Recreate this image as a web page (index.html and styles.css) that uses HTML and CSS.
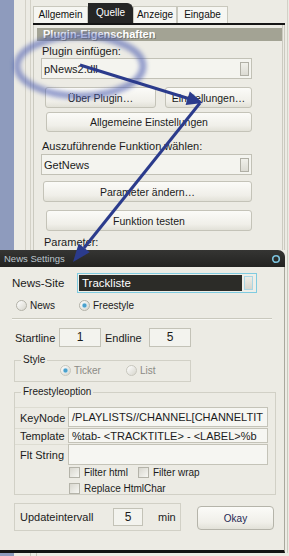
FILE: index.html
```html
<!DOCTYPE html>
<html lang="de">

<head>
    <meta charset="utf-8">
    <meta name="viewport" content="width=device-width, initial-scale=1.0">
    <title>News Settings</title>

    <link rel="stylesheet" href="styles.css">
</head>

<body>

    <div class="desk">
        <div class="strip"></div>
        <div class="rail"></div>
        <div class="dialog">
            <div class="tabs">
                <div class="tab tab-allg">Allgemein</div>
                <div class="tab tab-quelle">Quelle</div>
                <div class="tab tab-anz">Anzeige</div>
                <div class="tab tab-ein">Eingabe</div>
            </div>
            <div class="tabline"></div>
            <div class="panel">
                <div class="caption">Plugin-Eigenschaften</div>
                <p class="lbl lbl-plugin">Plugin einfügen:</p>
                <div class="combo combo-plugin"><span>pNews2.dll</span><i class="drop"></i></div>
                <div class="btnrow">
                    <button class="btn btn-about">Über Plugin…</button>
                    <button class="btn btn-settings">Einstellungen…</button>
                </div>
                <button class="btn btn-general">Allgemeine Einstellungen</button>
                <p class="lbl lbl-func">Auszuführende Funktion wählen:</p>
                <div class="combo combo-func"><span>GetNews</span><i class="drop"></i></div>
                <button class="btn btn-params">Parameter ändern…</button>
                <button class="btn btn-test">Funktion testen</button>
                <p class="lbl lbl-params">Parameter:</p>
            </div>
        </div>
        <div class="edge"></div>
    </div>

    <div class="lower">
        <div class="win">
            <div class="titlebar">
                <span>News Settings</span>
                <svg class="winicon" width="10" height="10" viewBox="0 0 10 10">
                    <circle cx="5" cy="5" r="3.3" fill="none" stroke="#7cc4df" stroke-width="1.6"/>
                </svg>
            </div>
            <div class="winbody">
                <div class="row row-site">
                    <span class="site-lbl">News-Site</span>
                    <div class="sitebox">
                        <div class="sitefield">Trackliste</div>
                        <i class="sitedrop"></i>
                    </div>
                </div>
                <div class="row row-mode">
                    <span class="opt opt-news"><span class="radio"></span>News</span>
                    <span class="opt"><span class="radio on"></span>Freestyle</span>
                </div>
                <div class="sep"></div>
                <div class="row row-lines">
                    <span class="start-lbl">Startline</span>
                    <span class="num">1</span>
                    <span class="end-lbl">Endline</span>
                    <span class="num">5</span>
                </div>
                <fieldset class="group group-style">
                    <legend>Style</legend>
                    <div class="row row-style">
                        <span class="opt opt-off opt-ticker"><span class="radio on dim"></span>Ticker</span>
                        <span class="opt opt-off"><span class="radio dim"></span>List</span>
                    </div>
                </fieldset>
                <fieldset class="group group-free">
                    <legend>Freestyleoption</legend>
                    <div class="field field-key">
                        <span class="fname">KeyNode</span>
                        <span class="fval">/PLAYLISTS//CHANNEL[CHANNELTIT</span>
                    </div>
                    <div class="field field-tpl">
                        <span class="fname">Template</span>
                        <span class="fval">%tab- &lt;TRACKTITLE&gt; - &lt;LABEL&gt;%b</span>
                    </div>
                    <div class="field field-flt">
                        <span class="fname">Flt String</span>
                        <span class="fval"></span>
                    </div>
                    <div class="checks checks-1">
                        <span class="opt opt-html"><span class="check"></span>Filter html</span>
                        <span class="opt"><span class="check"></span>Filter wrap</span>
                    </div>
                    <div class="checks checks-2">
                        <span class="opt"><span class="check"></span>Replace HtmlChar</span>
                    </div>
                </fieldset>
                <div class="bottomrow">
                    <div class="update">
                        <span class="upd-lbl">Updateintervall</span>
                        <span class="num num-upd">5</span>
                        <span class="min">min</span>
                    </div>
                    <button class="btn btn-okay">Okay</button>
                </div>
            </div>
        </div>
        <div class="edge edge-low"></div>
    </div>

    <div class="tail"></div>

    <!-- markierung: kreis und pfeile ueber dem screenshot -->
    <svg class="marks" width="289" height="556" viewBox="0 0 289 556">
        <defs>
            <filter id="soft" x="-20%" y="-40%" width="140%" height="180%">
                <feGaussianBlur stdDeviation="2.2"/>
            </filter>
        </defs>
        <ellipse cx="80" cy="66" rx="63" ry="30" fill="none" stroke="#4658b0" stroke-width="7" opacity="0.55" filter="url(#soft)"/>
        <line x1="80" y1="65" x2="190" y2="99" stroke="#2b3b8c" stroke-width="3"/>
        <polygon points="203,103 189.8,91.6 185.6,105" fill="#2b3b8c"/>
        <line x1="200" y1="103" x2="84" y2="248" stroke="#2b3b8c" stroke-width="3"/>
        <polygon points="73,262 78.7,243.5 89.7,252.3" fill="#2b3b8c"/>
    </svg>

</body>

</html>
```

FILE: styles.css
```css
* {
    box-sizing: border-box;
}

html,
body {
    margin: 0;
}

body {
    position: relative;
    width: 289px;
    height: 556px;
    overflow: hidden;
    background: #ecebe4;
    font-family: "Liberation Sans", Arial, sans-serif;
    font-size: 11px;
    color: #1b1b1b;
}

/* hintergrund-dialog */

.desk {
    display: flex;
    height: 250px;
    overflow: hidden;
}

.strip {
    width: 14px;
    background: #8e9bbd;
}

.rail {
    width: 19px;
    background: linear-gradient(to right, #ecebe4 11px, #d3d1c7 11px 12px, #ecebe4 12px 16px, #d3d1c7 16px 17px, #ecebe4 17px);
}

.dialog {
    display: flex;
    flex-direction: column;
    width: 252px;
}

.edge {
    width: 4px;
    background: linear-gradient(to right, #ecebe4 2px, #d3d1c7 2px 3px, #ecebe4 3px);
}

.tabs {
    display: flex;
    align-items: flex-end;
    height: 23px;
}

.tab {
    height: 17px;
    border: 1px solid #c9c8bd;
    border-bottom: none;
    background: #f6f6f2;
    font-size: 10px;
    line-height: 16px;
    text-align: center;
    color: #111;
}

.tab-allg {
    width: 55px;
}

.tab-quelle {
    width: 45px;
    height: 20px;
    border-color: #252525;
    border-top-right-radius: 6px;
    background: #252525;
    color: #fff;
    line-height: 18px;
}

.tab-anz {
    width: 44px;
}

.tab-ein {
    width: 51px;
}

.tabline {
    height: 2px;
    background: #151515;
}

.panel {
    flex: 1;
    border-left: 1px solid #cbcac0;
    border-right: 3px double #cbcac0;
}

.caption {
    height: 13px;
    margin: 3px 0 0 3px;
    padding-left: 6px;
    background: #a3a394;
    color: #fff;
    font-weight: bold;
    font-size: 11px;
    line-height: 13px;
    text-shadow: 1px 1px 0 #7b7b70;
}

.lbl {
    height: 12px;
    margin: 0 0 0 8px;
    line-height: 12px;
    white-space: nowrap;
}

.lbl-plugin {
    margin-top: 4px;
}

.combo {
    display: flex;
    align-items: center;
    justify-content: space-between;
    width: 211px;
    height: 21px;
    margin: 1px 0 0 7px;
    padding: 0 2px 0 2px;
    border: 1px solid #c2c1b6;
    background: #f4f4ef;
    font-size: 11px;
}

.drop {
    width: 9px;
    height: 14px;
    border: 1px solid #b0afa5;
    background: linear-gradient(#f0f0ea, #dcdbd3);
}

.btn {
    display: block;
    height: 21px;
    margin: 0;
    padding: 0;
    border: 1px solid #c4c3b8;
    border-radius: 3px;
    background: linear-gradient(#fbfbf8, #f0efe9 70%, #e2e1d8);
    font-family: inherit;
    font-size: 10.5px;
    color: #1b1b1b;
    white-space: nowrap;
}

.btnrow {
    display: flex;
    margin-top: 8px;
}

.btn-about {
    width: 111px;
    margin-left: 11px;
}

.btn-settings {
    width: 87px;
    margin-left: 9px;
}

.btn-general {
    width: 206px;
    height: 20px;
    margin: 4px 0 0 12px;
}

.lbl-func {
    margin-top: 8px;
}

.combo-func {
    margin-top: 2px;
}

.btn-params {
    width: 209px;
    margin: 6px 0 0 9px;
}

.btn-test {
    width: 206px;
    margin: 8px 0 0 12px;
}

.lbl-params {
    margin: 5px 0 0 10px;
}

/* news settings fenster */

.lower {
    display: flex;
    height: 303px;
}

.win {
    display: flex;
    flex-direction: column;
    width: 285px;
}

.edge-low {
    background: linear-gradient(to right, #ecebe4 2px, #c9c8bd 2px 3px, #ecebe4 3px);
}

.titlebar {
    display: flex;
    align-items: center;
    justify-content: space-between;
    height: 17px;
    padding: 0 4px;
    border-top-right-radius: 7px;
    background: linear-gradient(#353533, #232321);
    color: #bcc6ce;
    font-size: 9.5px;
}

.winicon {
    display: block;
}

.winbody {
    flex: 1;
    border-right: 1px solid #a9a89d;
    border-bottom: 3px solid #141414;
}

.row {
    display: flex;
    align-items: center;
}

.row-site {
    height: 20px;
    margin-top: 6px;
}

.site-lbl {
    width: 65px;
    margin-left: 12px;
    font-size: 11.5px;
}

.sitebox {
    display: flex;
    align-items: center;
    width: 180px;
    height: 20px;
    padding: 1px;
    border: 1px solid #7fcbe0;
    background: #eeeee8;
}

.sitefield {
    width: 163px;
    height: 16px;
    padding-left: 3px;
    background: #2c2c28;
    color: #fff;
    font-size: 11.5px;
    line-height: 16px;
}

.sitedrop {
    width: 9px;
    height: 14px;
    margin-left: 2px;
    border: 1px solid #a9d6e4;
    background: linear-gradient(#ecece6, #d6d5cd);
}

.row-mode {
    height: 12px;
    margin-top: 6px;
}

.opt {
    display: flex;
    align-items: center;
    gap: 3px;
    font-size: 10px;
    white-space: nowrap;
}

.opt-news {
    width: 63px;
    margin-left: 16px;
}

.radio {
    flex: none;
    width: 11px;
    height: 11px;
    border: 1px solid #b3b2a8;
    border-radius: 50%;
    background: linear-gradient(135deg, #fff, #d6d5cc);
}

.radio.on {
    background: radial-gradient(circle, #4aa0cc 0 1.5px, #cde6f0 2.5px, transparent 3px), linear-gradient(135deg, #fff, #d6d5cc);
}

.radio.dim {
    border-color: #c8c7be;
}

.opt-off {
    color: #8b8a85;
}

.sep {
    width: 260px;
    height: 2px;
    margin: 7px 0 0 12px;
    border-top: 1px solid #c9c8bd;
    border-bottom: 1px solid #f8f8f4;
}

.row-lines {
    height: 19px;
    margin-top: 8px;
}

.start-lbl {
    width: 44px;
    margin-left: 15px;
}

.end-lbl {
    width: 44px;
    margin-left: 4px;
}

.num {
    width: 42px;
    height: 19px;
    border: 1px solid #c3c2b7;
    background: #f3f3ee;
    font-size: 12px;
    line-height: 17px;
    text-align: center;
}

.group {
    margin: 0 0 0 14px;
    padding: 0;
    border: 1px solid #d1d0c6;
    min-width: 0;
}

.group legend {
    margin-left: 6px;
    padding: 0 2px;
    font-size: 10px;
    line-height: 10px;
}

.group-style {
    width: 177px;
    margin-top: 8px;
    padding-bottom: 5px;
}

.row-style {
    height: 11px;
}

.opt-ticker {
    width: 66px;
    margin-left: 45px;
}

.group-free {
    width: 262px;
    margin-top: 4px;
    padding-top: 9px;
}

.group-free legend {
    line-height: 12px;
}

.field {
    display: flex;
    height: 20px;
}

.field-tpl {
    height: 15px;
    margin-top: 1px;
}

.field-flt {
    height: 21px;
    margin-top: 1px;
}

.fname {
    width: 53px;
    padding-left: 5px;
    border-top: 1px solid #dddcd2;
    white-space: nowrap;
    display: flex;
    align-items: center;
}

.fval {
    width: 200px;
    padding-left: 3px;
    border: 1px solid #c4c3b8;
    background: #f6f6f2;
    white-space: nowrap;
    overflow: hidden;
    display: flex;
    align-items: center;
}

.checks {
    display: flex;
    height: 11px;
    margin-left: 54px;
}

.checks .opt {
    gap: 4px;
}

.checks-1 {
    margin-top: 2px;
}

.checks-2 {
    margin-top: 5px;
}

.opt-html {
    width: 69px;
}

.check {
    flex: none;
    width: 11px;
    height: 11px;
    border: 1px solid #b4b3a9;
    background: linear-gradient(135deg, #d8d7cf, #f7f7f3);
}

.bottomrow {
    display: flex;
    align-items: flex-start;
    margin-top: 8px;
}

.update {
    display: flex;
    align-items: center;
    width: 167px;
    height: 28px;
    margin-left: 14px;
    padding-left: 5px;
    border: 1px solid #d1d0c6;
}

.upd-lbl {
    width: 93px;
}

.num-upd {
    width: 30px;
    height: 18px;
    line-height: 16px;
}

.min {
    margin-left: 15px;
}

.btn-okay {
    width: 77px;
    height: 24px;
    margin: 3px 0 0 16px;
    border-color: #b5b4aa;
    border-radius: 4px;
    font-size: 10px;
    color: #1f2752;
}

.tail {
    height: 3px;
    background: linear-gradient(to right, #8e9bbd 14px, #ecebe4 14px 30px, #c9c8bd 30px 31px, #ecebe4 31px 36px, #c9c8bd 36px 37px, #ecebe4 37px);
}

.marks {
    position: absolute;
    top: 0;
    left: 0;
    pointer-events: none;
}
```
